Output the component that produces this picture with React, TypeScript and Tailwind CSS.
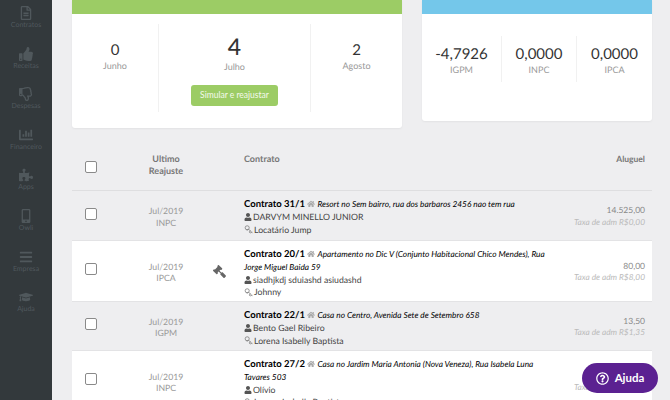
import { FaChartBar, FaGavel, FaGraduationCap, FaHome, FaMobileAlt, FaPuzzlePiece, FaBars, FaRegFileAlt, FaRegThumbsDown, FaThumbsUp, FaUser, FaRegQuestionCircle } from 'react-icons/fa'
import { Key } from 'lucide-react'

const menu = [
  { label: 'Contratos', Icon: FaRegFileAlt },
  { label: 'Receitas', Icon: FaThumbsUp },
  { label: 'Despesas', Icon: FaRegThumbsDown },
  { label: 'Financeiro', Icon: FaChartBar },
  { label: 'Apps', Icon: FaPuzzlePiece },
  { label: 'Owli', Icon: FaMobileAlt },
  { label: 'Empresa', Icon: FaBars },
  { label: 'Ajuda', Icon: FaGraduationCap },
]

const rows = [
  {
    title: 'Contrato 31/1',
    address: 'Resort no Sem bairro, rua dos barbaros 2456 nao tem rua',
    owner: 'DARVYM MINELLO JUNIOR',
    tenant: 'Locatário Jump',
    index: 'INPC',
    rent: '14.525,00',
    fee: 'Taxa de adm R$0,00',
    height: 'h-[50px]',
    white: false,
    gavel: false,
  },
  {
    title: 'Contrato 20/1',
    address: 'Apartamento no Dic V (Conjunto Habitacional Chico Mendes), Rua Jorge Miguel Baida 59',
    owner: 'siadhjkdj sduiashd asiudashd',
    tenant: 'Johnny',
    index: 'IPCA',
    rent: '80,00',
    fee: 'Taxa de adm R$8,00',
    height: 'h-[61px]',
    white: true,
    gavel: true,
  },
  {
    title: 'Contrato 22/1',
    address: 'Casa no Centro, Avenida Sete de Setembro 658',
    owner: 'Bento Gael Ribeiro',
    tenant: 'Lorena Isabelly Baptista',
    index: 'IGPM',
    rent: '13,50',
    fee: 'Taxa de adm R$1,35',
    height: 'h-[49px]',
    white: false,
    gavel: false,
  },
  {
    title: 'Contrato 27/2',
    address: 'Casa no Jardim Maria Antonia (Nova Veneza), Rua Isabela Luna Tavares 503',
    owner: 'Olívio',
    tenant: 'Lorena Isabelly Baptista',
    index: 'INPC',
    rent: '50,00',
    fee: 'Taxa de adm R$5,00',
    height: 'h-[61px]',
    white: true,
    gavel: false,
  },
]

const Checkbox = () => (
  <div className="size-[12px] rounded-[2px] border border-[#8a8a8a] bg-white" />
)

const Stat = ({ value, label }: { value: string; label: string }) => (
  <div className="flex flex-col items-center">
    <div className="text-[15px] leading-[20px] text-[#333]">{value}</div>
    <div className="text-[9px] leading-[12px] text-[#999]">{label}</div>
  </div>
)

const App = () => {
  return (
    <div
      className="flex h-[400px] w-[670px] overflow-hidden bg-[#eeeef0] text-[#333] [text-rendering:geometricPrecision]"
      style={{ fontFamily: 'Lato, sans-serif' }}
    >
      <aside className="flex w-[52px] shrink-0 flex-col bg-[#33393c] pt-[6px]">
        {menu.map(({ label, Icon }) => (
          <div key={label} className="flex h-[40.6px] flex-col items-center text-[#50585c]">
            <Icon className="h-[14px] w-[14px]" />
            <span className="mt-[1px] text-[7px] leading-[9px]">{label}</span>
          </div>
        ))}
      </aside>

      <main className="min-w-0 flex-1 pl-[20px] pr-[18px]">
        <div className="flex items-start gap-[20px]">
          <section className="h-[128px] w-[330px] rounded-b-[3px] bg-white shadow-[0_1px_2px_rgba(0,0,0,0.05)]">
            <div className="h-[14px] bg-[#9ccc65]" />
            <div className="mt-[10px] flex h-[88px]">
              <div className="w-[87px] border-r border-[#f1f1f1] pt-[16px]">
                <Stat value="0" label="Junho" />
              </div>
              <div className="flex w-[152px] flex-col items-center border-r border-[#f1f1f1] pt-[9px]">
                <div className="text-[23px] font-medium leading-[26px] text-[#333]">4</div>
                <div className="mt-[2px] text-[9px] leading-[12px] text-[#999]">Julho</div>
                <button className="mt-[12px] h-[21px] w-[87px] rounded-[3px] bg-[#9ccc65] text-[8.5px] text-[#f4f9ec]">
                  Simular e reajustar
                </button>
              </div>
              <div className="flex-1 pt-[16px]">
                <Stat value="2" label="Agosto" />
              </div>
            </div>
          </section>

          <section className="h-[121px] w-[230px] rounded-b-[3px] bg-white shadow-[0_1px_2px_rgba(0,0,0,0.05)]">
            <div className="h-[14px] bg-[#74c7ea]" />
            <div className="mt-[22px] flex h-[46px]">
              <div className="w-[80px] border-r border-[#f1f1f1] pt-[8px]">
                <Stat value="-4,7926" label="IGPM" />
              </div>
              <div className="w-[75px] border-r border-[#f1f1f1] pt-[8px]">
                <Stat value="0,0000" label="INPC" />
              </div>
              <div className="flex-1 pt-[8px]">
                <Stat value="0,0000" label="IPCA" />
              </div>
            </div>
          </section>
        </div>

        <div className="mt-[22px] w-[580px]">
          <div className="flex h-[41px] border-b border-[#dedee0] text-[9px] font-bold leading-[12px] text-[#777]">
            <div className="flex w-[38px] items-center justify-center pb-[6px]">
              <Checkbox />
            </div>
            <div className="ml-[18px] w-[76px] pt-[3px] text-center">
              Ultimo
              <br />
              Reajuste
            </div>
            <div className="w-[40px]" />
            <div className="flex-1 pt-[3px]">Contrato</div>
            <div className="pr-[7px] pt-[3px] text-[8.5px]">Aluguel</div>
          </div>

          {rows.map((row) => (
            <div
              key={row.title}
              className={`flex border-b border-[#e3e3e5] ${row.height} ${row.white ? 'bg-white' : ''}`}
            >
              <div className="flex w-[38px] items-center justify-center pb-[4px]">
                <Checkbox />
              </div>
              <div className="ml-[18px] flex w-[76px] flex-col justify-center pt-[2px] text-center text-[8.7px] leading-[11.5px] text-[#999]">
                <div>Jul/2019</div>
                <div>{row.index}</div>
              </div>
              <div className="flex w-[40px] items-center pl-[9px]">
                {row.gavel && <FaGavel className="h-[13px] w-[13px] -scale-x-100 text-[#666]" />}
              </div>
              <div className="min-w-0 flex-1 pt-[7px] text-[8.7px] leading-[12.3px] text-[#444]">
                <div className="text-black">
                  <span className="text-[9.5px] font-bold">{row.title}</span>{' '}
                  <FaHome className="inline h-[8px] w-[8px] align-[-1px] text-[#aaa]" />{' '}
                  <span className="text-[8.3px] italic">{row.address}</span>
                </div>
                <div className="flex items-center gap-[1px]">
                  <FaUser className="h-[8px] w-[8px] text-[#555]" />
                  {row.owner}
                </div>
                <div className="flex items-center gap-[1px]">
                  <Key className="h-[9px] w-[9px] rotate-90 text-[#777]" />
                  {row.tenant}
                </div>
              </div>
              <div className="flex w-[96px] shrink-0 flex-col justify-center pr-[7px] pt-[2px] text-right leading-[11.5px]">
                <div className="text-[8.5px] text-[#888]">{row.rent}</div>
                <div className="text-[8.3px] italic text-[#bbb]">{row.fee}</div>
              </div>
            </div>
          ))}
        </div>
      </main>

      <button className="fixed bottom-[7px] left-[582px] flex h-[30px] w-[76px] items-center justify-center gap-[6px] rounded-[15px] bg-[#5b2191] text-[11.5px] font-bold text-white">
        <FaRegQuestionCircle className="h-[13px] w-[13px]" />
        Ajuda
      </button>
    </div>
  )
}

export default App
